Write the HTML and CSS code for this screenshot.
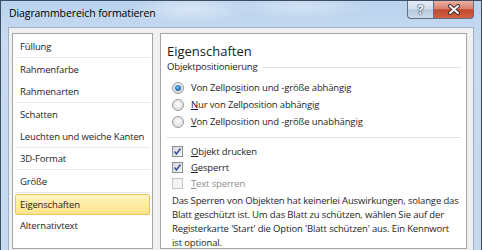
FILE: index.html
```html
<!DOCTYPE html>
<html lang="de">
<head>
  <meta charset="UTF-8" />
  <title>Diagrammbereich formatieren</title>
  <link rel="stylesheet" href="styles.css">
</head>
<body>

  <div class="window">
    <div class="titlebar">
      <span class="title">Diagrammbereich formatieren</span>
      <div class="caption-buttons">
        <div class="cap-btn help">?</div>
        <div class="cap-btn close">
          <svg width="14" height="11" viewBox="0 0 14 11">
            <path d="M3 2 L11 9 M11 2 L3 9" stroke="#3a2a2a" stroke-width="4" stroke-linecap="round" />
            <path d="M3 2 L11 9 M11 2 L3 9" stroke="#fff" stroke-width="2" stroke-linecap="round" />
          </svg>
        </div>
      </div>
    </div>

    <div class="client">
      <!-- category list -->
      <ul class="nav">
        <li class="sep">Füllung</li>
        <li>Rahmenfarbe</li>
        <li class="sep">Rahmenarten</li>
        <li>Schatten</li>
        <li class="sep">Leuchten und weiche Kanten</li>
        <li class="sep">3D-Format</li>
        <li class="sep">Größe</li>
        <li class="active">Eigenschaften</li>
        <li>Alternativtext</li>
      </ul>

      <!-- properties page -->
      <div class="panel">
        <h1>Eigenschaften</h1>
        <div class="group-head"><span>Objektpositionierung</span></div>

        <div class="options">
          <label class="opt"><span class="radio on"></span>Von Zellpo<u>s</u>ition und -größe abhängig</label>
          <label class="opt"><span class="radio"></span><u>N</u>ur von Zellposition abhängig</label>
          <label class="opt"><span class="radio"></span><u>V</u>on Zellposition und -größe unabhängig</label>
        </div>

        <div class="divider"></div>

        <div class="checks">
          <label class="opt"><span class="check on"><svg width="9" height="9" viewBox="0 0 9 9"><path d="M1.5 4.5 L3.5 7 L7.5 1.5" fill="none" stroke="#3d5597" stroke-width="1.6" /></svg></span><u>O</u>bjekt drucken</label>
          <label class="opt"><span class="check on"><svg width="9" height="9" viewBox="0 0 9 9"><path d="M1.5 4.5 L3.5 7 L7.5 1.5" fill="none" stroke="#3d5597" stroke-width="1.6" /></svg></span><u>G</u>esperrt</label>
          <label class="opt disabled"><span class="check"></span><u>T</u>ext sperren</label>
        </div>

        <p class="note">Das Sperren von Objekten hat keinerlei Auswirkungen, solange das<br>Blatt geschützt ist. Um das Blatt zu schützen, wählen Sie auf der<br>Registerkarte 'Start' die Option 'Blatt schützen' aus. Ein Kennwort<br>ist optional.</p>
      </div>
    </div>
  </div>

</body>
</html>
```

FILE: styles.css
```css
body {
  margin: 0;
  font-family: 'Open Sans', 'Noto Sans', sans-serif;
  font-size: 9.5px;
  letter-spacing: -0.15px;
  color: #1e1e1e;
}

.window {
  width: 482px;
  height: 250px;
  box-sizing: border-box;
  border: 1px solid #3e4d60;
  border-bottom: none;
  background: linear-gradient(to bottom, #b9d2ee, #c8dbf0 40px, #c6daef);
  display: flex;
  flex-direction: column;
  overflow: hidden;
}

.titlebar {
  height: 26px;
  display: flex;
  justify-content: space-between;
  padding: 0 7px 0 8px;
  background:
    radial-gradient(ellipse 60px 14px at 190px 8px, rgba(255, 255, 255, 0.45), transparent),
    radial-gradient(ellipse 70px 12px at 300px 6px, rgba(255, 255, 255, 0.35), transparent);
}

.title {
  padding-top: 5px;
  font-size: 10.5px;
  letter-spacing: -0.1px;
  line-height: 14px;
  color: #000;
}

.caption-buttons {
  display: flex;
  height: 18px;
}

.cap-btn {
  box-sizing: border-box;
  height: 18px;
  border: 1px solid #5f6f86;
  border-top: none;
  display: flex;
  align-items: center;
  justify-content: center;
}

.help {
  width: 26px;
  border-right: none;
  border-radius: 0 0 0 4px;
  background: linear-gradient(to bottom, #e4edf7, #cfdcea 48%, #b7c9de 52%, #cbdaea);
  color: #fff;
  font-weight: bold;
  font-size: 12px;
  text-shadow: 0 0 1px #2c3e55, 0 0 1px #2c3e55, 0 0 2px #2c3e55;
}

.close {
  width: 41px;
  border-radius: 0 0 4px 0;
  background: linear-gradient(to bottom, #eab0a3, #d9806d 45%, #c6472f 52%, #d2613f);
}

.client {
  flex: 1;
  margin: 0 7px;
  border: 1px solid #9fb0c5;
  border-bottom: none;
  background: #f0f0f0;
  padding: 5px 6px 0 3px;
  display: flex;
  gap: 7px;
}

.nav {
  width: 141px;
  height: 216px;
  box-sizing: border-box;
  margin: 0;
  padding: 2px 0 0;
  list-style: none;
  background: #fff;
  border: 1px solid #a5a5a5;
}

.nav li {
  height: 22.4px;
  box-sizing: border-box;
  margin: 0 2px;
  padding-left: 5px;
  display: flex;
  align-items: center;
  white-space: nowrap;
}

.nav li.sep {
  border-bottom: 1px solid #e6e8eb;
}

.nav li.active {
  height: 21px;
  margin: 1px 2px 0;
  padding-left: 4px;
  background: linear-gradient(to bottom, #fff3c2, #fde48a);
  border: 1px solid #ebc55c;
  border-radius: 2px;
}

.panel {
  width: 307px;
  height: 216px;
  box-sizing: border-box;
  background: #fff;
  border: 1px solid #a5a5a5;
  padding: 8px 4px 0 6px;
}

.panel h1 {
  margin: 0;
  font-size: 13px;
  font-weight: normal;
  letter-spacing: 0;
  line-height: 18px;
  color: #1a1a1a;
}

.group-head {
  display: flex;
  align-items: center;
  gap: 4px;
  line-height: 14px;
}

.group-head::after {
  content: "";
  flex: 1;
  height: 1px;
  margin-right: 1px;
  background: #dde3e9;
}

.options {
  margin-top: 5px;
  padding-left: 5px;
}

.opt {
  display: flex;
  align-items: center;
  height: 17px;
  white-space: nowrap;
}

.radio {
  width: 12px;
  height: 12px;
  box-sizing: border-box;
  margin-right: 7px;
  border-radius: 50%;
  border: 1px solid #9a9a9a;
  background: radial-gradient(circle at 50% 40%, #fbfbfb, #d6d6d6);
  display: flex;
  align-items: center;
  justify-content: center;
}

.radio.on::after {
  content: "";
  width: 6px;
  height: 6px;
  border-radius: 50%;
  background: radial-gradient(circle at 45% 40%, #7cc0f0, #1d5ca6 70%);
}

.divider {
  height: 1px;
  margin: 7px 1px 0 -1px;
  background: #dde3e9;
}

.checks {
  margin-top: 5px;
  padding-left: 5px;
}

.checks .opt {
  height: 16px;
}

.check {
  width: 11px;
  height: 11px;
  box-sizing: border-box;
  margin-right: 8px;
  border: 1px solid #8e8f8f;
  background: linear-gradient(135deg, #d3d6db, #f7f7f7);
  display: flex;
  align-items: center;
  justify-content: center;
}

.opt.disabled {
  color: #8d8d8d;
}

.opt.disabled .check {
  border-color: #c8c8c8;
  background: #f4f4f4;
}

.note {
  margin: 3px 0 0 5px;
  line-height: 14px;
  white-space: nowrap;
}
```
